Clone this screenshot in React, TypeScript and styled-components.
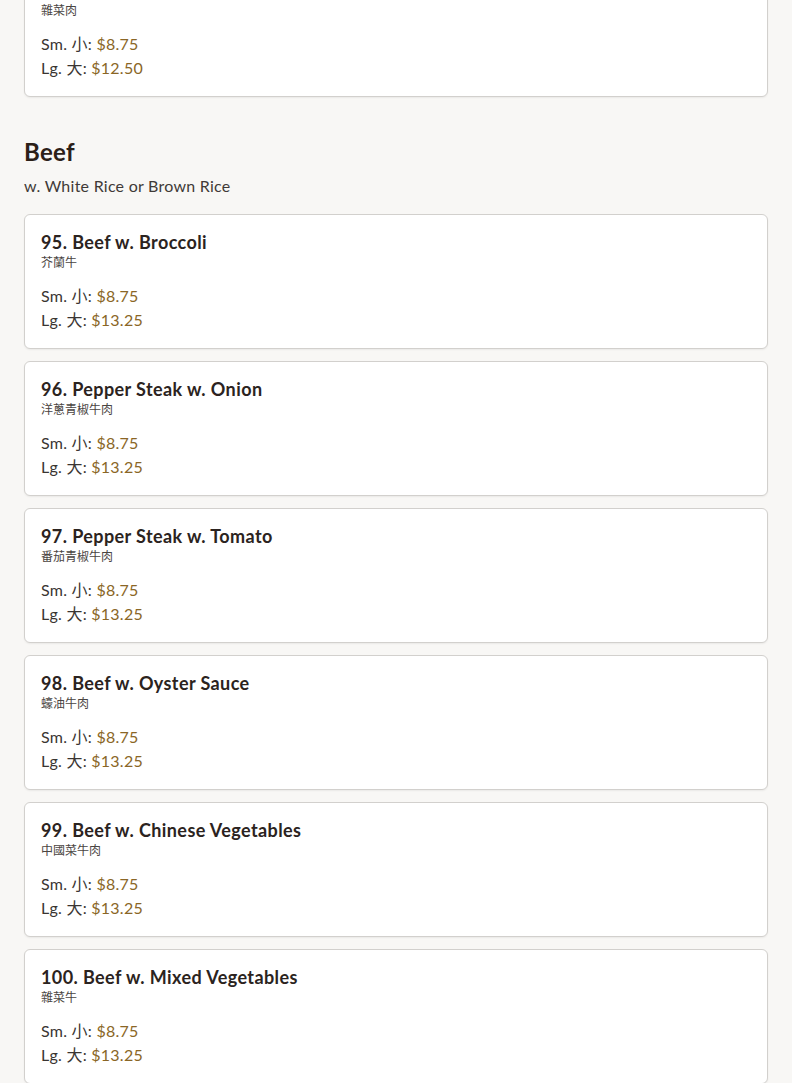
import styled, {createGlobalStyle} from "styled-components";

type Item = { no: number, name: string, zh: string, small: string, large: string };

const carried: Item[] = [
    {no: 94, name: "Pork w. Mixed Vegetables", zh: "雜菜肉", small: "$8.75", large: "$12.50"},
];

const beef: Item[] = [
    {no: 95, name: "Beef w. Broccoli", zh: "芥蘭牛", small: "$8.75", large: "$13.25"},
    {no: 96, name: "Pepper Steak w. Onion", zh: "洋蔥青椒牛肉", small: "$8.75", large: "$13.25"},
    {no: 97, name: "Pepper Steak w. Tomato", zh: "番茄青椒牛肉", small: "$8.75", large: "$13.25"},
    {no: 98, name: "Beef w. Oyster Sauce", zh: "蠔油牛肉", small: "$8.75", large: "$13.25"},
    {no: 99, name: "Beef w. Chinese Vegetables", zh: "中國菜牛肉", small: "$8.75", large: "$13.25"},
    {no: 100, name: "Beef w. Mixed Vegetables", zh: "雜菜牛", small: "$8.75", large: "$13.25"},
];

function MenuCard({item}: { item: Item }) {
    return (
        <Card>
            <DishName>{item.no}. {item.name}</DishName>
            <DishZh>{item.zh}</DishZh>
            <Prices>
                <PriceRow>Sm. 小: <Price>{item.small}</Price></PriceRow>
                <PriceRow>Lg. 大: <Price>{item.large}</Price></PriceRow>
            </Prices>
        </Card>
    );
}

export default function App() {
    return (
        <>
            <GlobalStyle/>
            <Page>
                <CardList>
                    {carried.map(item => <MenuCard key={item.no} item={item}/>)}
                </CardList>
                <Section>
                    <SectionTitle>Beef</SectionTitle>
                    <SectionNote>w. White Rice or Brown Rice</SectionNote>
                    <CardList>
                        {beef.map(item => <MenuCard key={item.no} item={item}/>)}
                    </CardList>
                </Section>
            </Page>
        </>
    );
}

const GlobalStyle = createGlobalStyle`
    html, body {
        margin: 0;
        background: #f8f7f5;
    }

    body {
        font-family: "Lato", "Noto Sans CJK TC", sans-serif;
        color: #2b2320;
        letter-spacing: 0.25px;
    }
`;

const Page = styled.main`
    padding: 0 24px 40px;
    margin-top: -38px;
`;

const Section = styled.section`
    margin-top: 40px;
`;

const SectionTitle = styled.h2`
    margin: 0;
    font-size: 24px;
    line-height: 29px;
    font-weight: 700;
    letter-spacing: 0.3px;
    color: #2b2018;
`;

const SectionNote = styled.p`
    margin: 8px 0 16px;
    font-size: 16px;
    line-height: 24px;
    color: #3f3a37;
`;

const CardList = styled.div`
    display: flex;
    flex-direction: column;
    gap: 12px;
`;

const Card = styled.article`
    background: #fff;
    border: 1px solid #d2d0cd;
    border-radius: 6px;
    box-shadow: 0 1px 2px rgba(0, 0, 0, 0.06);
    padding: 16px;
`;

const DishName = styled.h3`
    margin: 0;
    font-size: 18px;
    line-height: 23px;
    font-weight: 700;
    letter-spacing: 0.4px;
    color: #2b2320;
`;

const DishZh = styled.div`
    font-size: 12px;
    line-height: 17px;
    letter-spacing: 0;
    color: #4a4542;
`;

const Prices = styled.div`
    margin-top: 13px;
    display: flex;
    flex-direction: column;
`;

const PriceRow = styled.div`
    font-size: 16px;
    line-height: 24px;
    color: #3a3532;
`;

const Price = styled.span`
    color: #8a6626;
`;
